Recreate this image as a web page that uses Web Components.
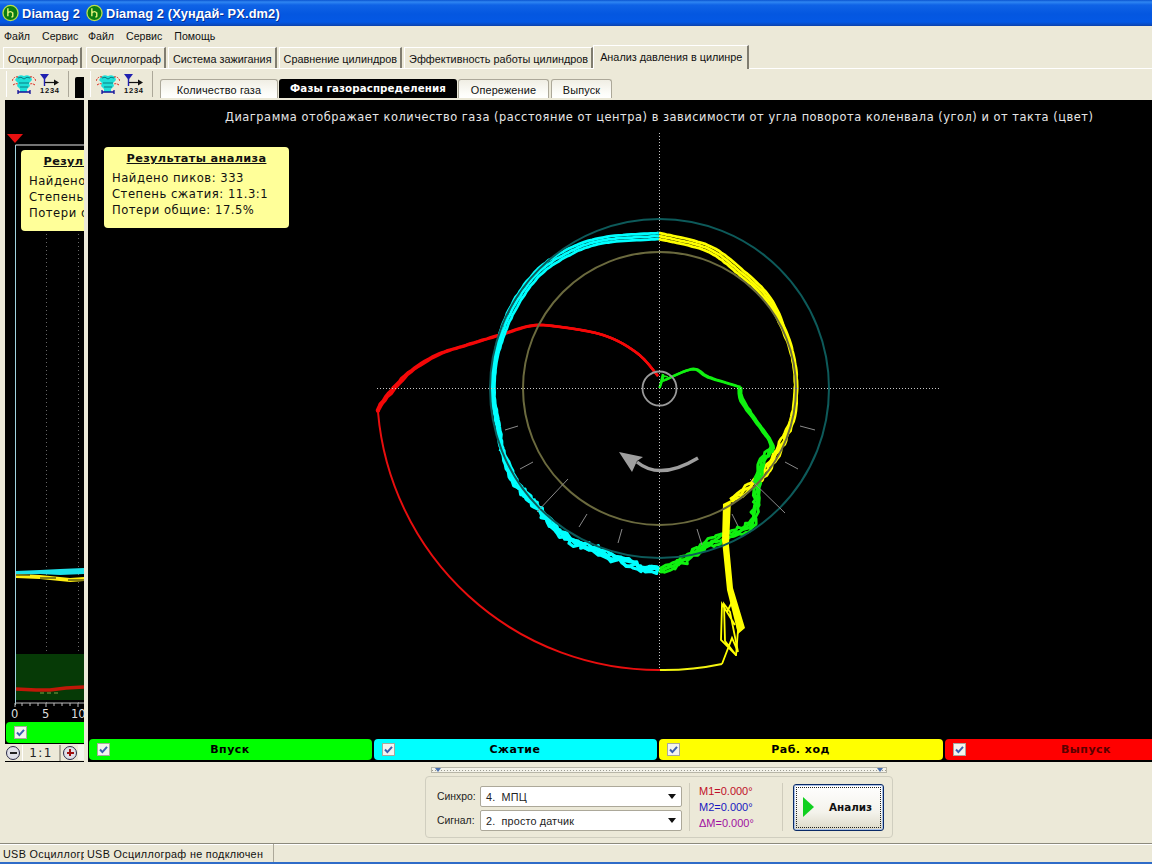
<!DOCTYPE html>
<html><head><meta charset="utf-8"><title>Diamag 2</title>
<style>
html,body{margin:0;padding:0;background:#ece9d8;overflow:hidden}
body{font:11px "Liberation Sans",Arial,sans-serif;color:#000}
x-desktop{width:1152px;height:864px}
</style></head><body>
<x-desktop>
  <x-window style="width:84px">
    <x-titlebar title-text="Diamag 2"></x-titlebar>
    <x-menubar items="Файл|Сервис"></x-menubar>
    <x-tabstrip items="Осциллограф" pad="3"></x-tabstrip>
    <x-toolbar black></x-toolbar>
    <x-scope></x-scope>
    <x-statusbar text="USB Осциллограф не подключен"></x-statusbar>
  </x-window>
  <x-window style="flex:1" divider>
    <x-titlebar title-text="Diamag 2 (Хундай- PX.dm2)"></x-titlebar>
    <x-menubar items="Файл|Сервис|Помощь"></x-menubar>
    <x-tabstrip items="Осциллограф|Система зажигания|Сравнение цилиндров|Эффективность работы цилиндров|Анализ давления в цилинре" active="4" pad="2"></x-tabstrip>
    <x-toolbar>
      <x-subtab w="118">Количество газа</x-subtab>
      <x-subtab w="178" selected>Фазы газораспределения</x-subtab>
      <x-subtab w="91" style="margin-right:2px">Опережение</x-subtab>
      <x-subtab w="61">Выпуск</x-subtab>
    </x-toolbar>
    <x-plot></x-plot>
    <x-controls></x-controls>
    <x-statusbar text="USB Осциллограф не подключен" extra></x-statusbar>
  </x-window>
</x-desktop>
<script>
const def=(n,c)=>customElements.define(n,c);
const sh=(el,html)=>{el.attachShadow({mode:'open'}).innerHTML=html;return el.shadowRoot};
const MONO='"DejaVu Sans",Verdana,sans-serif';

const ICONS=`
<svg width="24" height="22" viewBox="0 0 24 22">
 <path d="M5 4q3-3 7-1 4-2 7 1l1 3-3 3 1 3-3 3v3H8v-3L5 13l1-3-3-3z" fill="#1ee0d8"/>
 <path d="M6 5q3-2 6 1 3-3 6-1M7 10h10M8 14h8" stroke="#0a7c84" fill="none"/>
 <path d="M0 8q2-5 6-4M24 8q-2-5-6-4" stroke="#d8281c" fill="none" stroke-dasharray="2 1"/>
 <path d="M1 12q3-2 5-1M23 12q-3-2-5-1" stroke="#d8281c" fill="none" stroke-dasharray="2 1"/>
 <path d="M6 19h12M6 17v4M18 17v4" stroke="#10109a" stroke-width="1.3" fill="none"/>
</svg>
<svg width="22" height="22" viewBox="0 0 22 22" style="margin-left:3px">
 <path d="M1 1h9L5.5 7z" fill="#2020b0"/><path d="M5.5 6v7" stroke="#2020b0" stroke-width="1.4"/>
 <path d="M6 9.5h11" stroke="#111" stroke-width="1.2"/><path d="M15 6.5l5 3-5 3z" fill="#111"/>
 <text x="1" y="20" font-family="Liberation Sans,sans-serif" font-size="7.5" font-weight="700" fill="#111" textLength="19">1234</text>
</svg>`;

def('x-desktop',class extends HTMLElement{constructor(){super();sh(this,`<style>:host{display:flex;overflow:hidden}</style><slot></slot>`)}});

def('x-window',class extends HTMLElement{connectedCallback(){sh(this,`<style>
 :host{display:flex;flex-direction:column;height:864px;overflow:hidden;background:#ece9d8;min-width:0;flex:none;position:relative}
 .in{display:flex;flex-direction:column;height:864px;width:100%}
 </style><div class="in"><slot></slot></div>`)}});

def('x-titlebar',class extends HTMLElement{connectedCallback(){sh(this,`<style>
 :host{display:flex;align-items:center;height:26px;flex:none;white-space:nowrap;overflow:hidden;
  background:linear-gradient(#0a54d0 0,#2f86f2 2px,#0f63e6 5px,#0457e0 14px,#0458e4 22px,#0a49bd 25px,#0a3fa8 26px)}
 svg{margin-left:2px;flex:none}
 b{font:bold 12.8px "Liberation Sans",Arial,sans-serif;color:#fff;margin-left:3px;text-shadow:1px 1px 0 #0a2f90;letter-spacing:.15px}
 </style>
 <svg width="17" height="18" viewBox="0 0 18 18"><circle cx="9" cy="9" r="8" fill="#0c7c12" stroke="#b8e04c" stroke-width="1.4"/><path d="M6.2 4v8.5M6.2 9q2.8-3 5.2 0v3.4q0 1-1.5.6" stroke="#e8f27a" stroke-width="1.5" fill="none"/></svg>
 <b>${this.getAttribute('title-text')}</b>`)}});

def('x-menubar',class extends HTMLElement{connectedCallback(){
 const it=this.getAttribute('items').split('|');
 sh(this,`<style>
 :host{display:flex;height:19px;flex:none;background:#ece9d8;align-items:center;padding-left:4px;gap:12px;white-space:nowrap;overflow:hidden;font:10.6px "Liberation Sans",Arial,sans-serif;color:#111}
 </style>${it.map(t=>`<span>${t}</span>`).join('')}`)}});

def('x-tabstrip',class extends HTMLElement{connectedCallback(){
 const it=this.getAttribute('items').split('|'),a=+this.getAttribute('active');
 const has=this.hasAttribute('active');
 sh(this,`<style>
 :host{display:flex;height:24px;flex:none;background:#ece9d8;padding-left:${this.getAttribute('pad')}px;white-space:nowrap;overflow:hidden;align-items:flex-end;box-sizing:border-box;font:10.85px "Liberation Sans",Arial,sans-serif;box-shadow:inset 0 -1px 0 #fff}
 .t{height:20px;line-height:23px;padding:0 3px 0 4px;border-left:1px solid #fff;border-top:1px solid #fff;border-right:2px solid #807d70;margin-right:2px;margin-bottom:1px;color:#111;background:#ece9d8;box-sizing:content-box;overflow:hidden}
 .t.on{height:23px;line-height:22px;margin:0 0 0 -2px;padding:0 5px 0 6px;position:relative;border-top:1px solid #fff}
 </style>${it.map((t,i)=>`<div class="t ${has&&i===a?'on':''}">${t}</div>`).join('')}`)}});

def('x-toolbar',class extends HTMLElement{connectedCallback(){
 sh(this,`<style>
 :host{display:flex;height:31px;flex:none;align-items:flex-end;background:#ece9d8;white-space:nowrap;overflow:hidden;box-sizing:border-box;padding-left:6px}
 .box{display:flex;align-items:center;height:26px;border-left:1px solid #fff;border-right:1px solid #aca899;padding:0 0 0 5px;margin-bottom:3px;flex:none;box-sizing:border-box;width:63px;margin-right:7px}
 .sub{display:flex;align-items:flex-end;height:21px;margin-bottom:2px}
 .blk{width:10px;height:21px;background:#000;margin-bottom:2px;flex:none;border-radius:2px 0 0 0;margin-left:-1px}
 </style><div class="box">${ICONS}</div>${this.hasAttribute('black')?'<div class="blk"></div>':'<div class="sub"><slot></slot></div>'}`)}});

def('x-subtab',class extends HTMLElement{connectedCallback(){
 const s=this.hasAttribute('selected');
 sh(this,`<style>
 :host{display:block;flex:none;height:19px;box-sizing:border-box;width:${this.getAttribute('w')}px;text-align:center;border-radius:3px 3px 0 0;margin-right:1px;
 ${s?`background:#000;color:#fff;font:bold 10.3px/18px ${MONO};letter-spacing:.08px;`:`background:linear-gradient(#f0eee4,#fdfdf9 75%,#fff);border:1px solid #aca899;border-bottom:none;color:#111;font:10.9px/21px "Liberation Sans",Arial,sans-serif;letter-spacing:.14px`}}
 </style><slot></slot>`)}});

def('x-check',class extends HTMLElement{connectedCallback(){sh(this,`<style>
 :host{display:block;width:13px;height:13px;flex:none;box-sizing:border-box;background:#f4f4ef;border:1px solid #a8a8a0}
 svg{display:block}</style><svg width="11" height="11" viewBox="0 0 11 11"><path d="M2 5.5l2.4 2.6L9 2.8" fill="none" stroke="#3a5fb0" stroke-width="2"/></svg>`)}});

def('x-legend',class extends HTMLElement{connectedCallback(){
 const c=this.getAttribute('color'),t=this.getAttribute('text-color')||'#000';
 sh(this,`<style>
 :host{display:flex;align-items:center;height:21px;box-sizing:border-box;background:${c};border-radius:4px;padding-left:8px;position:relative;flex:none;width:${this.getAttribute('w')}px;margin-right:2px;overflow:hidden}
 span{flex:1;text-align:center;font:bold 11px ${MONO};letter-spacing:.5px;color:${t};padding-right:22px}
 </style><x-check></x-check><span><slot></slot></span>`)}});

def('x-infobox',class extends HTMLElement{connectedCallback(){sh(this,`<style>
 :host{display:block;position:absolute;left:${this.getAttribute('x')}px;top:${this.getAttribute('y')}px;width:185px;height:81px;box-sizing:border-box;background:#ffff99;border-radius:4px;padding:4px 0 0 8px;color:#111;font:11.6px ${MONO};line-height:16px;letter-spacing:.52px;white-space:nowrap}
 h4{margin:0 0 3px;font:bold 11.3px/16px ${MONO};text-decoration:underline;text-align:center;padding-right:8px;letter-spacing:.35px}
 </style><h4>Результаты анализа</h4><div>Найдено пиков: 333</div><div>Степень сжатия: 11.3:1</div><div>Потери общие: 17.5%</div>`)}});

/* ---------- curve generation ---------- */
function rng(seed){return()=>{seed=(seed*1664525+1013904223)>>>0;return seed/4294967296-.5}}
const C=[659.5,388.5];
function densify(pts,step){
 const out=[];
 for(let i=0;i<pts.length-1;i++){
  const p0=pts[Math.max(0,i-1)],p1=pts[i],p2=pts[i+1],p3=pts[Math.min(pts.length-1,i+2)];
  const d=Math.hypot(p2[0]-p1[0],p2[1]-p1[1]),n=Math.max(1,Math.round(d/step));
  for(let k=0;k<n;k++){const t=k/n,t2=t*t,t3=t2*t;
   const f=j=>.5*(2*p1[j]+(-p0[j]+p2[j])*t+(2*p0[j]-5*p1[j]+4*p2[j]-p3[j])*t2+(-p0[j]+3*p1[j]-3*p2[j]+p3[j])*t3);
   const l=j=>(p1[j]||0)+((p2[j]||0)-(p1[j]||0))*t;
   out.push([f(0),f(1),l(2),l(3)]);}
 }
 const e=pts[pts.length-1];out.push([e[0],e[1],e[2]||0,e[3]||0]);return out;
}
function band(pts,o){
 const r=rng(o.seed),dp=densify(pts,o.step||3);let s='';
 for(let n=0;n<o.n;n++){
  const k=o.n>1?n/(o.n-1)-.5:0;
  const q=dp.map(p=>{const dx=p[0]-C[0],dy=p[1]-C[1],R=Math.hypot(dx,dy)||1,off=p[3]*k;
   return [(p[0]+dx/R*off+r()*p[2]).toFixed(1),(p[1]+dy/R*off+r()*p[2]).toFixed(1)].join(',')}).join(' ');
  s+=`<polyline points="${q}" fill="none" stroke="${o.c}" stroke-width="${o.w}" stroke-linejoin="round"/>`;
 }
 return s;
}
const RAW=(p,c,w)=>`<polyline points="${p}" fill="none" stroke="${c}" stroke-width="${w}" stroke-linejoin="miter"/>`;
const CYAN_LOW=[[660,569,4,4],[643,568,5,5],[617,558,5,5],[580,544,5,5],[558,531,4,5],[537,507,3.5,4],[515,481,3,4],[502,450,1.6,3]];
const CYAN_UP=[[502,450,1.6,3],[497,420,.8,3],[493,393,.5,3],[496,357,.5,3],[510,314,.6,6],[537,274,.6,6],[571,251,.5,6],[605,240,.4,6],[659,236,.3,6]];
const YEL=[[659,236,.3,6],[707,248,.4,6],[737,269,.6,6],[766,296,.6,5],[782,325,.6,3],[793,357,.5,2],[796,388,.6,2],[793,417,1,3],[785,437,1.6,4],[773,460,2.2,5],[762,476,2.2,5],[745,491,2.6,6],[731,500,2,3]];
const GRN0=[[665,380,0,0],[693,369,0,1],[708,377,.2,1.5],[740,387,.3,1.5]];
const GRN1=[[740,387,.3,1.5],[741,398,.8,3],[750,413,.8,3],[758,424,.6,3],[770,441,.6,3],[771,450,2.5,3],[763,460,3,4],[758,480,3,5],[755,510,3.5,6],[748,527,3.5,6],[710,543,4,7],[697,552,4,6],[673,566,4,5],[660,570,3,4]];
const RED=[[658,376,0,0],[637,353,0,0],[603,335,0,.5],[553,326,.1,.8],[530,326,.1,1],[503,334,.2,1.5],[467,345,.5,2],[437,355,.6,2.5],[410,372,.8,3],[395,387,1.2,3.5],[380,406,.6,3],[378,412,0,1]];
const tick=[[505,430,518,426],[520,469,533,462],[537,512,568,479],[579,527,587,514],[618,543,622,529],[702,545,697,529],[738,526,732,514],[785,513,750,479],[798,469,785,462],[815,430,800,426]];

function diagram(){
 let s='';
 s+=`<path d="M378 412A282 282 0 0 0 660 670" fill="none" stroke="#e80e0e" stroke-width="2"/>`;
 s+=band(RED,{seed:2,n:3,c:'#f40808',w:2.4,step:4});
 s+=band(CYAN_LOW,{seed:3,n:4,c:'#00ffff',w:3.2,step:3.5});
 s+=band(CYAN_UP,{seed:7,n:3,c:'#00ffff',w:2.8,step:3.5});
 s+=band(YEL,{seed:4,n:3,c:'#ffff00',w:2.8,step:3.5});
 s+=band(GRN0,{seed:6,n:2,c:'#10f010',w:2.4,step:4});
 s+=band(GRN1,{seed:5,n:4,c:'#10f010',w:2.8,step:3.5});
 s+=RAW('659.5,388 663,374 662,381 665,380','#10f010',2.4);
 s+=RAW('660,388 664,376 668,377','#10f010',1.6);
 s+=`<path d="M723 504L731 500 729 545 733 588 745 628 738 634 727 590 722 540z" fill="#ffff00"/>`;
 s+=RAW('735,625 722,604 721,640 736,655 725,641 724,604 730,612 738,652 732,638 722,664','#ffff00',1.8);
 s+=RAW('727,612 733,600 738,630 736,656','#ffff00',1.8);
 s+=`<path d="M722 664A282 282 0 0 1 660 670" fill="none" stroke="#f4f410" stroke-width="2"/>`;
 /* guide circles & crosshair */
 s+=`<circle cx="659.5" cy="388.5" r="169.5" fill="none" stroke="#0d5a5a" stroke-width="2"/>`;
 s+=`<circle cx="659.5" cy="388.5" r="136.5" fill="none" stroke="#6b6a3e" stroke-width="2"/>`;
 s+=`<path d="M377 388.5H940M659.5 133V670" stroke="#c8c8c8" stroke-dasharray="1 2" fill="none"/>`;
 s+=`<circle cx="659.5" cy="388.5" r="17" fill="none" stroke="#9a9a9a" stroke-width="1.8"/>`;
 s+=tick.map(t=>`<line x1="${t[0]}" y1="${t[1]}" x2="${t[2]}" y2="${t[3]}" stroke="#8a8a8a"/>`).join('');
 s+=`<path d="M698 458Q660 481 637 462" fill="none" stroke="#9e9e9e" stroke-width="3.4"/>`;
 s+=`<path d="M619 452L643 457 637 461 632 472z" fill="#9e9e9e"/>`;
 return s;
}

def('x-plot',class extends HTMLElement{connectedCallback(){sh(this,`<style>
 :host{display:flex;flex-direction:column;height:662px;flex:none;margin-left:4px;background:#000;position:relative;overflow:hidden}
 .cv{position:relative;height:639px;flex:none}
 svg{position:absolute;left:0;top:0;display:block}
 .cap{position:relative;padding:10px 0 0 137px;height:16px;font:11.4px/14px ${MONO};color:#e6e6e6;letter-spacing:.525px;white-space:nowrap}
 .lg{display:flex;padding-left:1px;height:21px;flex:none}
 </style>
 <div class="cv"><svg width="1064" height="639" viewBox="88 100 1064 639">${diagram()}</svg>
 <div class="cap">Диаграмма отображает количество газа (расстояние от центра) в зависимости от угла поворота коленвала (угол) и от такта (цвет)</div>
 <x-infobox x="16" y="47"></x-infobox></div>
 <div class="lg">
  <x-legend color="#00ff00" w="283">Впуск</x-legend>
  <x-legend color="#00ffff" w="283">Сжатие</x-legend>
  <x-legend color="#ffff00" w="284">Раб. ход</x-legend>
  <x-legend color="#ff0000" w="283" text-color="#5a0000">Выпуск</x-legend>
 </div>`)}});

def('x-scope',class extends HTMLElement{connectedCallback(){sh(this,`<style>
 :host{display:flex;flex-direction:column;height:662px;flex:none;margin-left:5px;background:#000;position:relative;overflow:visible;width:79px;box-sizing:border-box}
 .g{position:relative;height:622px;flex:none;overflow:hidden}
 .lab{position:absolute;top:607px;font:11.5px ${MONO};color:#ddd}
 svg{position:absolute;left:0;top:0}
 .strip{margin:0 0 0 1px;height:21px;background:#00ff00;border-radius:4px 0 0 4px;display:flex;align-items:center;padding-left:8px;flex:none}
 .zoom{height:17px;margin:1px 0 0 -5px;width:84px;display:flex;align-items:center;background:#ece9d8;flex:none;font:12px ${MONO};color:#222}
 .z{width:14px;height:14px;border-radius:50%;border:1.6px solid #2a2a48;box-sizing:border-box;display:flex;align-items:center;justify-content:center;flex:none;background:#e0e0e8}
 .z i{display:block;width:7px;height:2px;background:#222;position:relative}
 .p i{background:#a01010}.p i:after{content:"";position:absolute;left:2.5px;top:-2.5px;width:2px;height:7px;background:#a01010}
 .ml{margin-left:6px}
 .mid{width:40px;text-align:center;margin:0 2px;background:#ece9d8;border-right:2px solid #aca899;border-left:1px solid #fff;box-sizing:border-box;letter-spacing:1.5px;line-height:16px}
 .rest{width:6px;height:15px;background:#f6f5ee;margin-left:1px}
 </style>
 <div class="g">
  <svg width="79" height="622" viewBox="5 100 79 622">
   <path d="M15.5 145H84" stroke="#e8e8e8"/>
   <path d="M15.5 145V705" stroke="#9fd4e0"/>
   <path d="M7 134H23L15 143z" fill="#e81010"/>
   <path d="M46.5 230V703M78.5 230V703" stroke="#666" stroke-dasharray="1 3"/>
   <path d="M16 571L40 570 60 569 84 568V574L60 575 40 574 16 575z" fill="#1de0e8"/>
   <path d="M16 574L40 575 70 578 84 577V581L70 582 40 579 16 578z" fill="#ffee10"/>
   <path d="M16 575H30M40 578H56M68 580H84" stroke="#111" fill="none"/>
   <rect x="16" y="654" width="68" height="46" fill="#063a06"/>
   <path d="M16 689L36 690 50 690 66 688 84 687" stroke="#c01808" stroke-width="3.5" fill="none"/>
   <path d="M40 693H60" stroke="#80a040" fill="none" stroke-dasharray="4 3"/>
   <path d="M15 703H84M15 703v4M22 703v3M30 703v3M38 703v3M46 703v4M54 703v3M62 703v3M70 703v3M78 703v4" stroke="#bbb" fill="none"/>
  </svg>
  <x-infobox x="16" y="50"></x-infobox>
  <span class="lab" style="left:6px">0</span><span class="lab" style="left:37px">5</span><span class="lab" style="left:66px">10</span>
 </div>
 <div class="strip"><x-check></x-check></div>
 <div class="zoom"><div class="z ml"><i></i></div><div class="mid">1:1</div><div class="z p"><i></i></div><div class="rest"></div></div>`)}});

def('x-combo',class extends HTMLElement{connectedCallback(){sh(this,`<style>
 :host{display:flex;align-items:center;width:202px;height:21px;box-sizing:border-box;background:#fff;border:1px solid #aca899;border-radius:2px;padding-left:5px;font:10.8px "Liberation Sans",Arial,sans-serif;letter-spacing:.15px;white-space:pre;color:#222}
 span{flex:1}
 svg{margin-right:5px}
 </style><span><slot></slot></span><svg width="8" height="5" viewBox="0 0 8 5"><path d="M0 0h8L4 5z" fill="#111"/></svg>`)}});

def('x-controls',class extends HTMLElement{connectedCallback(){sh(this,`<style>
 :host{display:flex;flex-direction:column;align-items:flex-start;height:81px;flex:none;padding-left:341px;box-sizing:border-box;background:#ece9d8;font:10.4px "Liberation Sans",Arial,sans-serif}
 .split{height:6px;width:456px;margin:5px 0 2px 6px;box-sizing:border-box;border:1px solid #b8b6a8;background:repeating-linear-gradient(90deg,#9a9a90 0 1px,#f4f3ea 1px 3px);background-size:auto 1px;background-repeat:repeat-x;background-position:0 2px;display:flex;justify-content:space-between;padding:0 3px;align-items:center;background-color:#f4f3ea}
 .split i{width:0;height:0;border:3px solid transparent;border-top:4px solid #4a70b0;border-bottom:0}
 .grp{display:flex;align-items:center;width:468px;height:62px;box-sizing:border-box;border:1px solid #d0cebf;border-radius:4px;padding:0 0 0 11px;margin-top:1px}
 .rows{display:flex;flex-direction:column;gap:3px;padding-top:3px}
 .r{display:flex;align-items:center;color:#222}.r label{width:43px}
 .sep{width:1px;height:48px;background:#cfccbc;margin:0 9px 0 7px}
 .m{font:11px/16px "Liberation Sans",Arial,sans-serif;width:83px}
 .m div{white-space:nowrap}
 button{all:unset;display:flex;align-items:center;width:91px;height:47px;box-sizing:border-box;border:1px solid #0a2a66;border-radius:3px;background:linear-gradient(#fff,#f4f3ec 60%,#dcd9c8);position:relative;font:bold 10.4px ${MONO};color:#111;padding-left:9px;box-shadow:inset 0 0 0 1px #a8c0e8}
 button:after{content:"";position:absolute;inset:2px;border:1px dotted #222}
 svg{flex:none}
 button span{margin-left:15px}
 </style>
 <div class="split"><i></i><i></i></div>
 <div class="grp">
  <div class="rows">
   <div class="r"><label>Синхро:</label><x-combo>4.  МПЦ</x-combo></div>
   <div class="r"><label>Сигнал:</label><x-combo>2.  просто датчик</x-combo></div>
  </div>
  <div class="sep"></div>
  <div class="m"><div style="color:#c01028">M1=0.000°</div><div style="color:#1818c0">M2=0.000°</div><div style="color:#a010a0">ΔM=0.000°</div></div>
  <div class="sep" style="margin:0 10px 0 0"></div>
  <button><svg width="11" height="20" viewBox="0 0 11 20"><path d="M0 0L11 10 0 20z" fill="#10d020"/></svg><span>Анализ</span></button>
 </div>`)}});

def('x-statusbar',class extends HTMLElement{connectedCallback(){sh(this,`<style>
 :host{display:flex;height:21px;flex:none;box-sizing:border-box;background:#ece9d8;border-top:1px solid #8c8a7c;box-shadow:inset 0 1px 0 #fff;white-space:nowrap;overflow:hidden;position:relative;font:10.8px "Liberation Sans",Arial,sans-serif;letter-spacing:.32px;color:#111;border-bottom:2px solid #2f6cc8;align-items:center;margin-top:auto}
 .a{width:190px;flex:none;padding-left:3px;box-sizing:border-box;border-right:1px solid #aca899;height:100%;line-height:21px}
 </style><div class="a">${this.getAttribute('text')}</div>`)}});
</script>
</body></html>
